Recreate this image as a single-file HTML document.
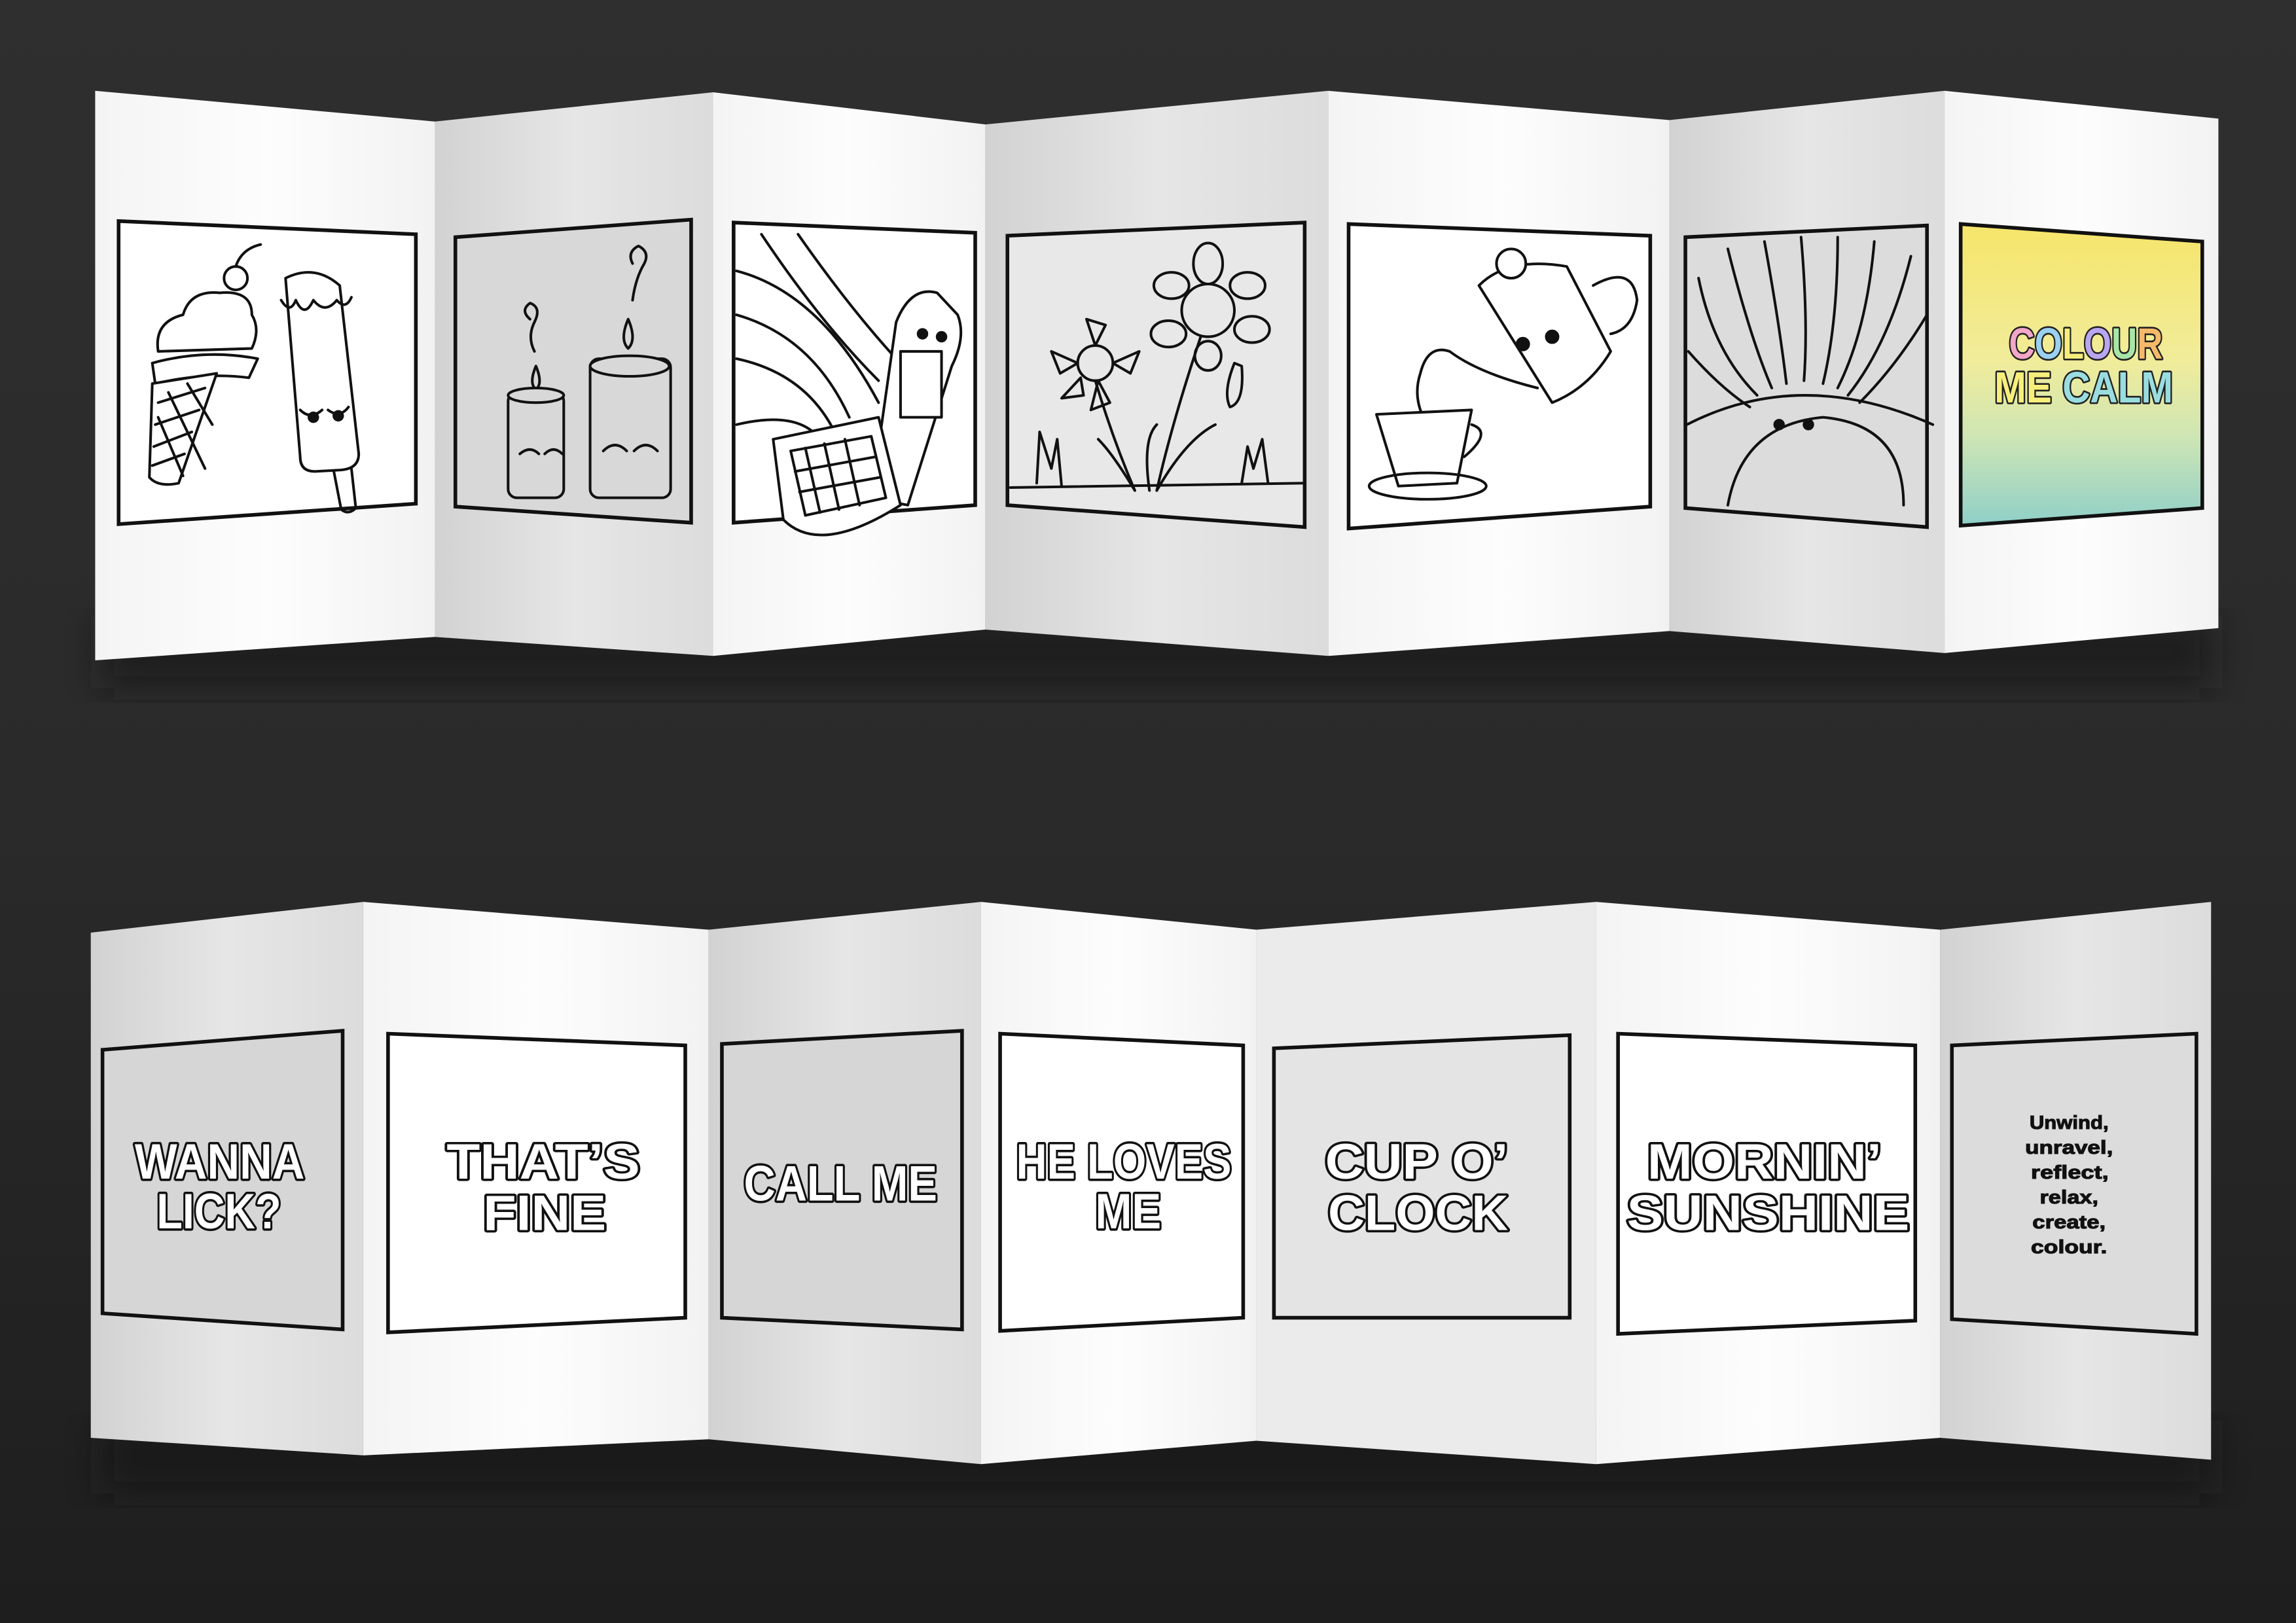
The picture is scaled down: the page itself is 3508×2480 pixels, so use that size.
<!DOCTYPE html>
<html><head><meta charset="utf-8"><style>
html,body{margin:0;padding:0;background:#2c2c2c;}
svg{display:block;}
</style></head><body>
<svg width="3508" height="2480" viewBox="0 0 1568 1108.5" preserveAspectRatio="none" xmlns="http://www.w3.org/2000/svg">
<defs>
<linearGradient id="bg" x1="0" y1="0" x2="0" y2="1">
<stop offset="0" stop-color="#2f2f2f"/><stop offset="0.5" stop-color="#2a2a2a"/><stop offset="1" stop-color="#1e1e1e"/></linearGradient>
<linearGradient id="gp" x1="0" y1="0" x2="1" y2="0">
<stop offset="0" stop-color="#d2d2d2"/><stop offset="0.5" stop-color="#e6e6e6"/><stop offset="1" stop-color="#dcdcdc"/></linearGradient>
<linearGradient id="wp" x1="0" y1="0" x2="1" y2="0">
<stop offset="0" stop-color="#f4f4f4"/><stop offset="0.5" stop-color="#fdfdfd"/><stop offset="1" stop-color="#f2f2f2"/></linearGradient>
<linearGradient id="cal" x1="0" y1="0" x2="0" y2="1">
<stop offset="0" stop-color="#f6e56a"/><stop offset="0.45" stop-color="#f1ec9a"/><stop offset="0.7" stop-color="#cfe6b4"/><stop offset="1" stop-color="#8fcfc8"/></linearGradient>
<filter id="sh" x="-10%" y="-10%" width="120%" height="130%"><feGaussianBlur stdDeviation="12"/></filter>
</defs>
<rect width="1568" height="1108.5" fill="url(#bg)"/>
<rect x="70" y="420" width="1440" height="50" fill="#141414" opacity="0.6" filter="url(#sh)"/>
<rect x="70" y="970" width="1440" height="50" fill="#141414" opacity="0.6" filter="url(#sh)"/>

<g stroke="none">
<polygon points="65,62 297,83 297,435 65,451" fill="url(#wp)"/>
<polygon points="297,83 487,63 487,448 297,435" fill="url(#gp)"/>
<polygon points="487,63 673,85 673,430 487,448" fill="url(#wp)"/>
<polygon points="673,85 907,62 907,448 673,430" fill="url(#gp)"/>
<polygon points="907,62 1140,82 1140,431 907,448" fill="url(#wp)"/>
<polygon points="1140,82 1328,62 1328,446 1140,431" fill="url(#gp)"/>
<polygon points="1328,62 1515,81 1515,429 1328,446" fill="url(#wp)"/>
</g>
<g stroke="#111" stroke-width="2.5">
<polygon points="81,151 284,160 284,344 81,358" fill="#fff"/>
<polygon points="311,162 472,150 472,357 311,346" fill="#d8d8d8"/>
<polygon points="501,152 666,159 666,345 501,357" fill="#fff"/>
<polygon points="688,161 891,152 891,360 688,345" fill="#e8e8e8"/>
<polygon points="921,153 1127,161 1127,346 921,361" fill="#fff"/>
<polygon points="1151,162 1316,154 1316,360 1151,347" fill="#dcdcdc"/>
<polygon points="1339,153 1504,165 1504,347 1339,359" fill="url(#cal)"/>
</g>

<g fill="none" stroke="#111" stroke-width="1.8" stroke-linecap="round" stroke-linejoin="round">
<circle cx="161" cy="190" r="8"/><path d="M161 182 Q165 170 178 167"/>
<path d="M108 240 Q105 220 125 215 Q130 198 150 200 Q172 198 172 215 Q178 225 172 238 Z" fill="#fff"/>
<path d="M104 248 Q140 238 176 245 L170 258 Q140 254 106 262 Z" fill="#fff"/>
<path d="M104 262 L148 255 L122 330 Q108 333 102 326 Z" fill="#fff"/>
<path d="M108 275 L140 265 M106 290 L136 280 M105 305 L131 295 M104 318 L126 310 M115 268 L140 320 M108 285 L125 325 M128 262 L145 290"/>
<path d="M195 190 Q215 180 232 195 L245 310 Q245 320 233 321 L215 322 Q205 322 205 312 Z" fill="#fff"/>
<path d="M228 322 L233 348 Q238 352 243 347 L240 320"/>
<path d="M192 205 Q198 215 202 205 Q208 218 214 205 Q222 215 230 205 Q236 212 240 203"/>
<path d="M205 280 Q212 287 220 280 M224 280 Q232 286 238 278"/>
<circle cx="214" cy="285" r="3" fill="#111"/><circle cx="231" cy="284" r="3" fill="#111"/>
<path d="M362 218 Q355 212 362 207 Q370 210 365 220 Q360 230 365 240"/>
<path d="M432 180 Q428 172 436 168 Q444 172 440 180 Q434 190 432 205"/>
<path d="M366 250 Q361 262 366 266 Q371 262 366 250Z"/><path d="M429 218 Q423 232 429 238 Q435 232 429 218Z"/>
<rect x="347" y="268" width="38" height="72" rx="6" fill="#d8d8d8"/>
<ellipse cx="366" cy="270" rx="19" ry="5" fill="#d8d8d8"/>
<rect x="403" y="245" width="55" height="95" rx="6" fill="#d8d8d8"/>
<ellipse cx="430" cy="250" rx="27" ry="7" fill="#d8d8d8"/>
<path d="M355 310 Q362 304 368 310 M372 310 Q378 304 384 310 M412 308 Q420 300 428 308 M433 308 Q441 300 449 308"/>
<path d="M503 185 Q560 200 600 275 M503 215 Q555 230 580 285 M503 245 Q550 255 570 295 M520 160 Q560 220 600 260 M545 160 Q580 210 612 245 M503 290 Q545 280 560 300"/>
<path d="M612 220 Q622 195 640 200 L654 215 Q660 230 650 250 L620 345 L595 340 Z" fill="#fff"/>
<rect x="615" y="240" width="28" height="45" fill="#fff"/>
<path d="M528 300 L600 285 L615 345 Q560 380 535 355 Z" fill="#fff"/>
<path d="M540 308 L595 298 L605 340 L550 352 Z M550 306 L560 350 M563 303 L573 348 M577 300 L587 345 M543 322 L598 312 M546 336 L601 326"/>
<circle cx="630" cy="228" r="3" fill="#111"/><circle cx="643" cy="230" r="3" fill="#111"/>
<circle cx="825" cy="212" r="18" fill="#e8e8e8"/>
<ellipse cx="825" cy="180" rx="10" ry="14"/><ellipse cx="852" cy="195" rx="12" ry="9"/><ellipse cx="855" cy="225" rx="12" ry="9"/><ellipse cx="800" cy="195" rx="12" ry="9"/><ellipse cx="798" cy="228" rx="12" ry="9"/><ellipse cx="825" cy="243" rx="9" ry="10"/>
<path d="M843 248 Q835 268 840 278 Q850 275 848 250Z"/>
<circle cx="748" cy="248" r="12"/>
<path d="M748 236 L742 218 L755 222 Z M760 248 L778 240 L772 255 Z M736 248 L718 240 L724 255 Z M750 260 L745 280 L758 275 Z M738 258 L725 272 L740 270 Z"/>
<path d="M748 260 Q760 300 775 335 M820 230 Q800 290 790 335"/>
<path d="M775 335 Q760 310 750 300 M790 335 Q810 300 830 290 M785 335 Q780 300 790 290"/>
<path d="M690 333 L891 330 M708 330 L710 295 L718 320 L722 300 L725 332 M848 330 L852 305 L856 320 L862 300 L866 330"/>
<path d="M1010 195 Q1030 175 1070 182 L1100 240 Q1085 265 1060 275 Z" fill="#fff"/>
<circle cx="1032" cy="180" r="10" fill="#fff"/>
<path d="M1088 195 Q1115 180 1118 205 Q1115 225 1100 228"/>
<path d="M1050 265 Q1010 255 990 240 Q975 235 970 255 Q965 270 972 285"/>
<path d="M940 283 L1005 280 L995 330 L955 332 Z" fill="#fff"/>
<path d="M1005 290 Q1020 295 1000 312"/>
<ellipse cx="975" cy="332" rx="40" ry="9"/>
<circle cx="1040" cy="235" r="4" fill="#111"/><circle cx="1060" cy="230" r="4" fill="#111"/>
<path d="M1152 290 Q1230 250 1320 290 M1180 345 Q1190 290 1245 285 Q1300 290 1300 345"/>
<path d="M1160 190 Q1170 240 1200 270 M1180 170 Q1195 230 1210 265 M1205 165 Q1215 220 1220 262 M1230 162 Q1235 220 1232 260 M1255 162 Q1255 220 1245 262 M1280 165 Q1275 225 1255 265 M1305 175 Q1290 235 1262 270 M1316 215 Q1295 250 1270 275 M1153 240 Q1175 265 1195 278"/>
<circle cx="1215" cy="290" r="3" fill="#111"/><circle cx="1235" cy="290" r="3" fill="#111"/>
</g>
<g font-family="Liberation Sans, sans-serif" font-weight="bold" font-size="30" stroke="#222" stroke-width="2.4" paint-order="stroke" stroke-linejoin="round" lengthAdjust="spacingAndGlyphs">
<text x="1372" y="245" textLength="105" lengthAdjust="spacingAndGlyphs"><tspan fill="#f2a6c8">C</tspan><tspan fill="#9ad0f0">O</tspan><tspan fill="#f7ef7a">L</tspan><tspan fill="#b9a6f0">O</tspan><tspan fill="#a8e6a8">U</tspan><tspan fill="#f5b96a">R</tspan></text>
<text x="1362" y="275" textLength="122" lengthAdjust="spacingAndGlyphs"><tspan fill="#f7ef7a">ME </tspan><tspan fill="#9adde0">CALM</tspan></text>
</g>

<g stroke="none">
<polygon points="62,637 248,616 248,994 62,982" fill="url(#gp)"/>
<polygon points="248,616 484,635 484,983 248,994" fill="url(#wp)"/>
<polygon points="484,635 670,616 670,1000 484,983" fill="url(#gp)"/>
<polygon points="670,616 858,635 858,984 670,1000" fill="url(#wp)"/>
<polygon points="858,635 1090,616 1090,1000 858,984" fill="#ebebeb"/>
<polygon points="1090,616 1325,635 1325,982 1090,1000" fill="url(#wp)"/>
<polygon points="1325,635 1510,616 1510,997 1325,982" fill="url(#gp)"/>
</g>
<g stroke="#111" stroke-width="2.5">
<polygon points="70,717 234,704 234,908 70,897" fill="#d6d6d6"/>
<polygon points="265,706 468,714 468,900 265,910" fill="#fff"/>
<polygon points="493,713 657,704 657,908 493,900" fill="#d6d6d6"/>
<polygon points="683,706 849,714 849,900 683,909" fill="#fff"/>
<polygon points="870,716 1072,707 1072,900 870,900" fill="#e4e4e4"/>
<polygon points="1105,706 1308,714 1308,902 1105,911" fill="#fff"/>
<polygon points="1333,714 1500,706 1500,911 1333,901" fill="#dcdcdc"/>
</g>
<g font-family="Liberation Sans, sans-serif" font-weight="bold" font-size="34" fill="#fff" stroke="#111" stroke-width="3.2" paint-order="stroke" stroke-linejoin="round">
<text x="92" y="805" textLength="116" lengthAdjust="spacingAndGlyphs">WANNA</text>
<text x="107" y="839" textLength="85" lengthAdjust="spacingAndGlyphs">LICK?</text>
<text x="305" y="805" textLength="132" lengthAdjust="spacingAndGlyphs">THAT’S</text>
<text x="330" y="840" textLength="84" lengthAdjust="spacingAndGlyphs">FINE</text>
<text x="508" y="820" textLength="132" lengthAdjust="spacingAndGlyphs">CALL ME</text>
<text x="694" y="805" textLength="147" lengthAdjust="spacingAndGlyphs">HE LOVES</text>
<text x="748" y="839" textLength="45" lengthAdjust="spacingAndGlyphs">ME</text>
<text x="905" y="805" textLength="125" lengthAdjust="spacingAndGlyphs">CUP O’</text>
<text x="907" y="840" textLength="123" lengthAdjust="spacingAndGlyphs">CLOCK</text>
<text x="1125" y="805" textLength="160" lengthAdjust="spacingAndGlyphs">MORNIN’</text>
<text x="1111" y="840" textLength="193" lengthAdjust="spacingAndGlyphs">SUNSHINE</text>
</g>
<g font-family="Liberation Sans, sans-serif" font-weight="bold" font-size="13" fill="#111" stroke="#111" stroke-width="0.5">
<text x="1386" y="771" textLength="54" lengthAdjust="spacingAndGlyphs">Unwind,</text>
<text x="1383" y="788" textLength="60" lengthAdjust="spacingAndGlyphs">unravel,</text>
<text x="1387" y="805" textLength="53" lengthAdjust="spacingAndGlyphs">reflect,</text>
<text x="1393" y="822" textLength="40" lengthAdjust="spacingAndGlyphs">relax,</text>
<text x="1388" y="839" textLength="50" lengthAdjust="spacingAndGlyphs">create,</text>
<text x="1387" y="856" textLength="52" lengthAdjust="spacingAndGlyphs">colour.</text>
</g>
</svg>
</body></html>
